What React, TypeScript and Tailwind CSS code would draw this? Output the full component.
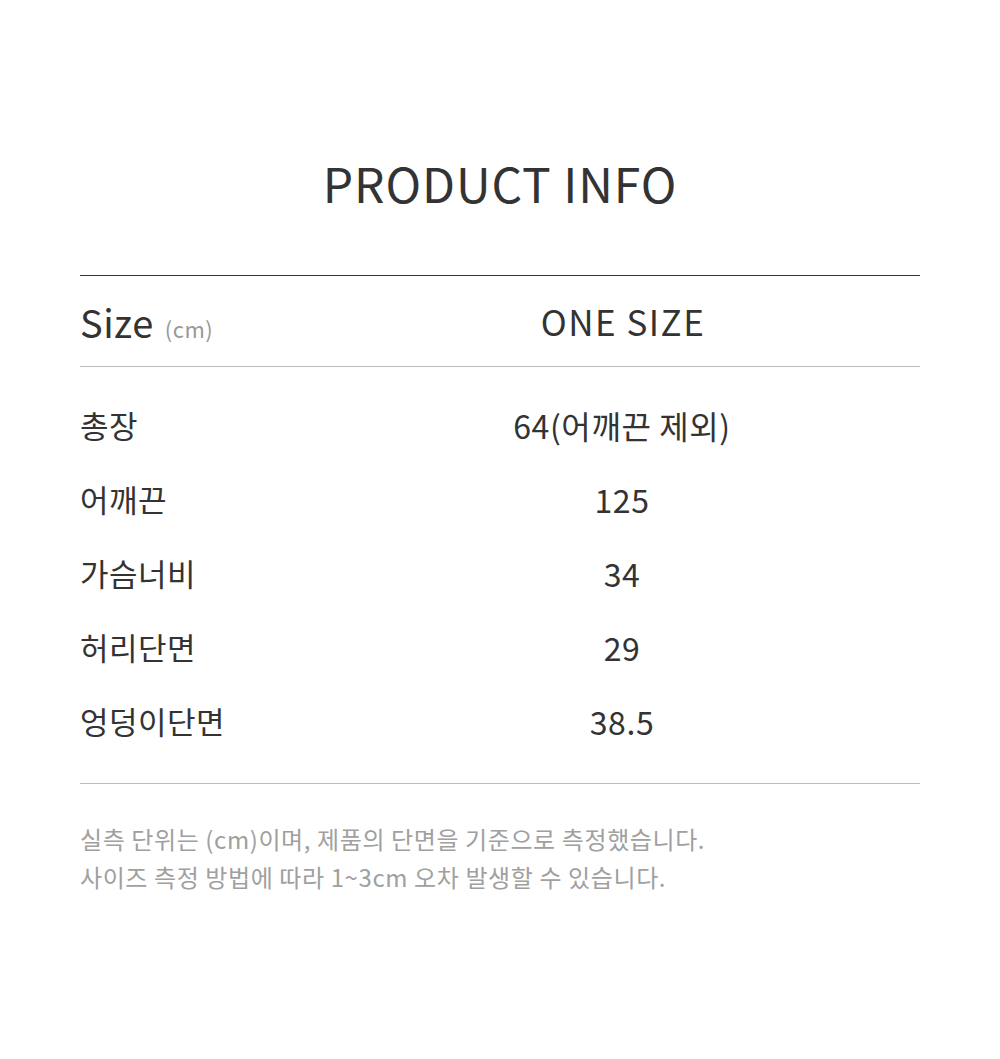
import React from 'react';

const rows: [string, string][] = [
  ['총장', '64(어깨끈 제외)'],
  ['어깨끈', '125'],
  ['가슴너비', '34'],
  ['허리단면', '29'],
  ['엉덩이단면', '38.5'],
];

const App: React.FC = () => {
  return (
    <div
      className="w-[1000px] h-[1059px] bg-white text-[#333] px-[80px]"
      style={{ fontFamily: '"Noto Sans CJK KR", "Noto Sans", sans-serif' }}
    >
      <h1 className="pt-[154px] text-center text-[48px] leading-[56px] tracking-[0.9px] font-normal">PRODUCT INFO</h1>

      <div className="mt-[65px] border-t border-[#333]">
        {/* header */}
        <div className="grid grid-cols-[242px_1fr] h-[91px] items-center border-b border-[#bbb]">
          <div className="flex items-baseline gap-[11px]">
            <span className="text-[38px] tracking-[0.5px]">Size</span>
            <span className="text-[22px] tracking-[0.5px] text-[#999]">(cm)</span>
          </div>
          <div className="text-center text-[35px] tracking-[1.5px] pl-[4px]">ONE SIZE</div>
        </div>

        {/* rows */}
        <div className="pt-[21px] pb-[25px] border-b border-[#bbb]">
          {rows.map(([label, value]) => (
            <div key={label} className="grid grid-cols-[242px_1fr] h-[74px] items-center">
              <div className="text-[31px] tracking-[0.5px]">{label}</div>
              <div className="text-center text-[32px] tracking-[0.6px] pl-[2px]">{value}</div>
            </div>
          ))}
        </div>
      </div>

      <div className="mt-[36px] text-[24px] leading-[38px] tracking-[0.6px] text-[#a0a0a0]">
        <p>실측 단위는 (cm)이며, 제품의 단면을 기준으로 측정했습니다.</p>
        <p>사이즈 측정 방법에 따라 1~3cm 오차 발생할 수 있습니다.</p>
      </div>
    </div>
  );
};

export default App;
